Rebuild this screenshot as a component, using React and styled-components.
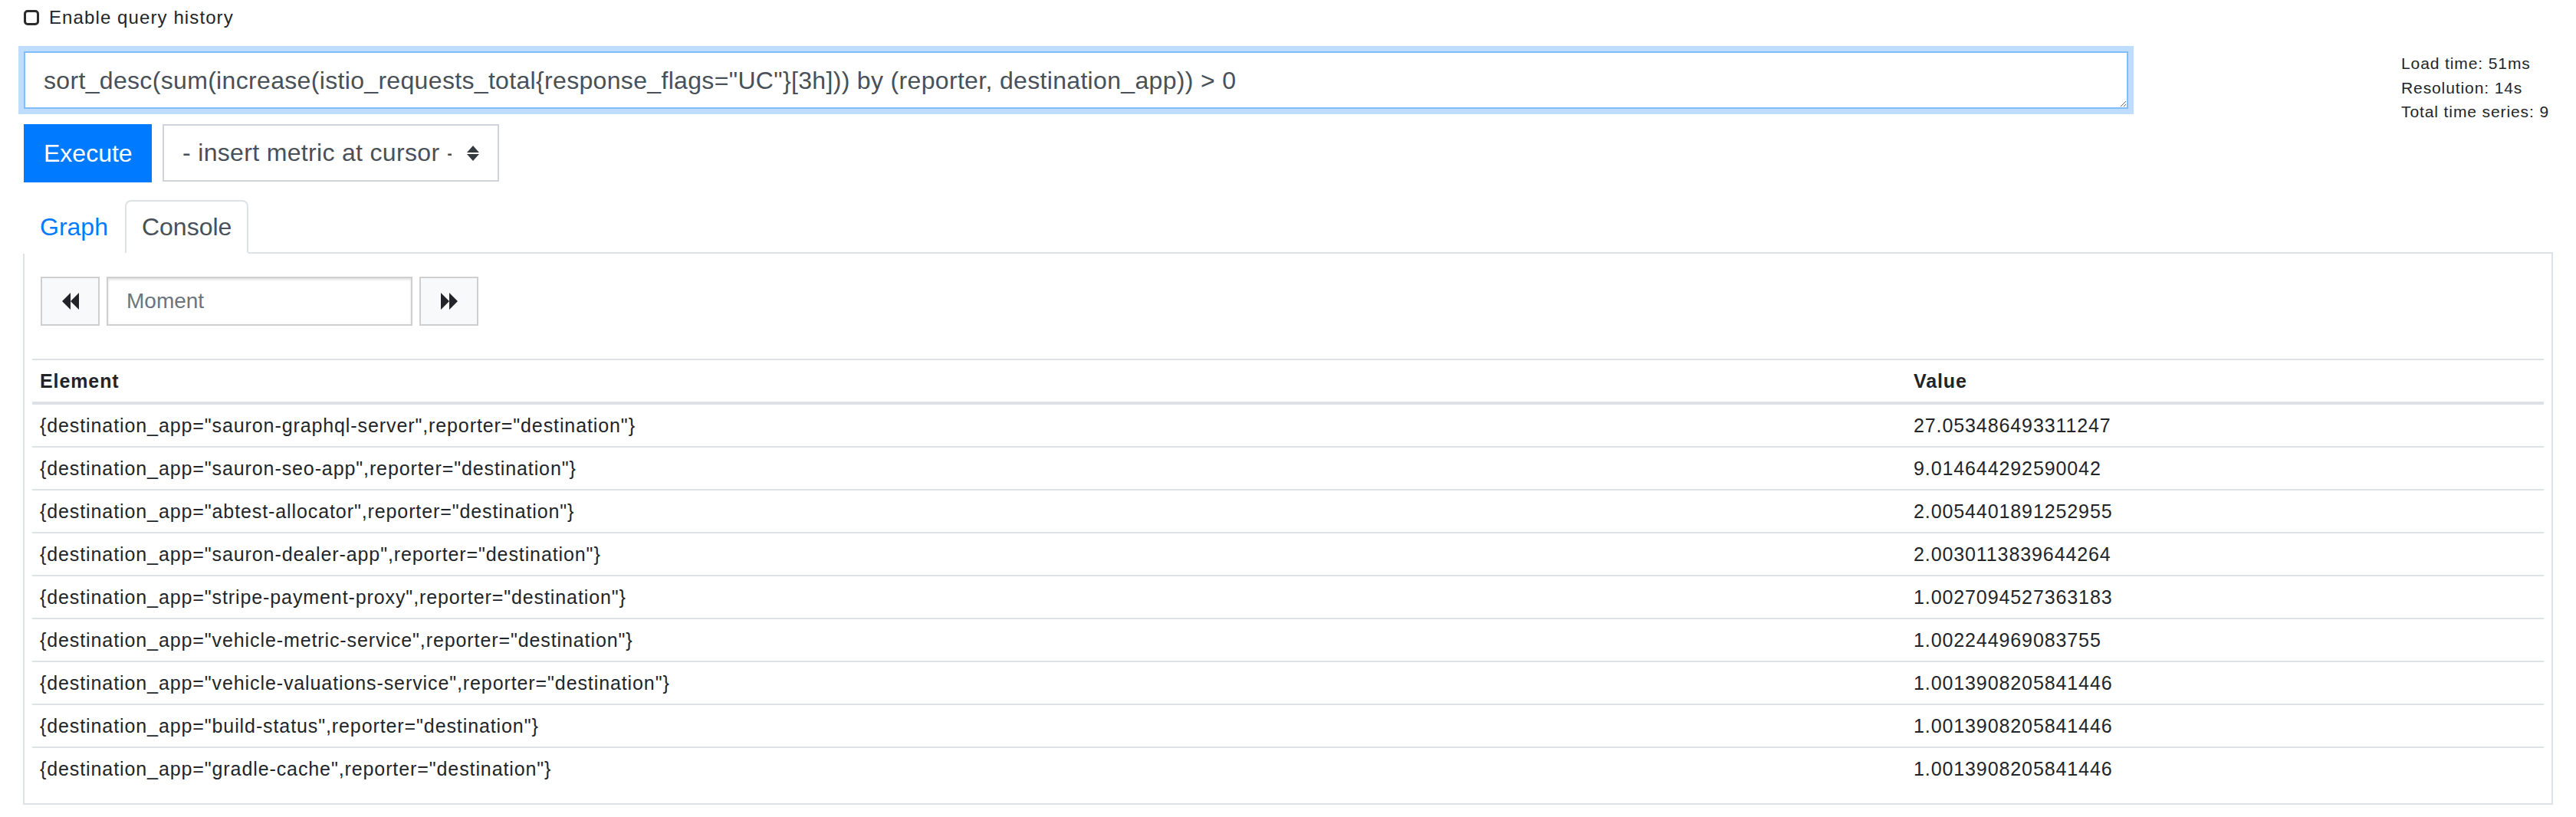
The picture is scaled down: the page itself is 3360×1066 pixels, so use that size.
import React from "react";
import styled, { createGlobalStyle } from "styled-components";

const GlobalStyle = createGlobalStyle`
  body {
    margin: 0;
    background: #fff;
    color: #212529;
    font-family: "Liberation Sans", Arial, Helvetica, sans-serif;
  }
`;

const rows = [
  ["sauron-graphql-server", "27.053486493311247"],
  ["sauron-seo-app", "9.014644292590042"],
  ["abtest-allocator", "2.0054401891252955"],
  ["sauron-dealer-app", "2.0030113839644264"],
  ["stripe-payment-proxy", "1.0027094527363183"],
  ["vehicle-metric-service", "1.002244969083755"],
  ["vehicle-valuations-service", "1.0013908205841446"],
  ["build-status", "1.0013908205841446"],
  ["gradle-cache", "1.0013908205841446"],
];

const BackIcon = () => (
  <svg width="22" height="22" viewBox="0 0 22 22">
    <path d="M0 11 L11 0 L11 22 Z M11 11 L22 0 L22 22 Z" fill="#212529" />
  </svg>
);

const ForwardIcon = () => (
  <svg width="22" height="22" viewBox="0 0 22 22">
    <path d="M0 0 L11 11 L0 22 Z M11 0 L22 11 L11 22 Z" fill="#212529" />
  </svg>
);

const SortArrows = () => (
  <svg width="16" height="20" viewBox="0 0 16 20">
    <path d="M8 0 L16 9 L0 9 Z M0 11 L16 11 L8 20 Z" fill="#343a40" />
  </svg>
);

const App = () => {
  return (
    <PAGE>
      <GlobalStyle />
      <HISTORY>
        <CHECKBOX type="checkbox" />
        <span>Enable query history</span>
      </HISTORY>

      <QUERYROW>
        <EDITOR>
          <EXPRESSION
            defaultValue={
              'sort_desc(sum(increase(istio_requests_total{response_flags="UC"}[3h])) by (reporter, destination_app)) > 0'
            }
            spellCheck={false}
          />
          <ACTIONS>
            <EXECUTE>Execute</EXECUTE>
            <SELECTBOX>
              <SELECTTEXT>- insert metric at cursor -</SELECTTEXT>
              <SortArrows />
            </SELECTBOX>
          </ACTIONS>
        </EDITOR>
        <STATS>
          <div>Load time: 51ms</div>
          <div>Resolution: 14s</div>
          <div>Total time series: 9</div>
        </STATS>
      </QUERYROW>

      <TABS>
        <TAB>Graph</TAB>
        <TAB active>Console</TAB>
      </TABS>

      <PANEL>
        <MOMENT>
          <STEPBUTTON>
            <BackIcon />
          </STEPBUTTON>
          <MOMENTINPUT placeholder="Moment" />
          <STEPBUTTON>
            <ForwardIcon />
          </STEPBUTTON>
        </MOMENT>

        <TABLE>
          <colgroup>
            <col style={{ width: "2444px" }} />
            <col />
          </colgroup>
          <thead>
            <tr>
              <TH>Element</TH>
              <TH>Value</TH>
            </tr>
          </thead>
          <tbody>
            {rows.map(([app, value]) => (
              <tr key={app}>
                <TD>{`{destination_app="${app}",reporter="destination"}`}</TD>
                <TD>{value}</TD>
              </tr>
            ))}
          </tbody>
        </TABLE>
      </PANEL>
    </PAGE>
  );
};

export default App;

const PAGE = styled.div`
  padding: 0 30px 11px 31px;
  box-sizing: border-box;
  width: 3360px;
`;

const HISTORY = styled.label`
  display: flex;
  align-items: center;
  gap: 13px;
  height: 46px;
  font-size: 24px;
  letter-spacing: 1.1px;
  color: #212529;
`;

const CHECKBOX = styled.input`
  appearance: none;
  margin: 0;
  width: 20px;
  height: 20px;
  box-sizing: border-box;
  border: 3px solid #2b2b2b;
  border-radius: 5px;
  background: #fff;
`;

const QUERYROW = styled.div`
  display: flex;
  align-items: flex-start;
  margin-top: 21px;
`;

const EDITOR = styled.div`
  width: 2745px;
  display: flex;
  flex-direction: column;
`;

const EXPRESSION = styled.textarea`
  box-sizing: border-box;
  width: 100%;
  height: 75px;
  margin: 0;
  padding: 12px 24px;
  border: 2px solid #80bdff;
  border-radius: 0;
  box-shadow: 0 0 0 7px rgba(0, 123, 255, 0.25);
  outline: none;
  font-family: "Liberation Sans", Arial, sans-serif;
  font-size: 32px;
  line-height: 48px;
  letter-spacing: 0.33px;
  color: #495057;
  resize: vertical;
  overflow: hidden;
`;

const ACTIONS = styled.div`
  display: flex;
  gap: 14px;
  margin-top: 20px;
`;

const EXECUTE = styled.button`
  box-sizing: border-box;
  width: 167px;
  height: 76px;
  padding: 0 24px;
  border: 2px solid #007bff;
  border-radius: 0;
  background: #007bff;
  color: #fff;
  font-family: "Liberation Sans", Arial, sans-serif;
  font-size: 32px;
`;

const SELECTBOX = styled.div`
  box-sizing: border-box;
  width: 439px;
  height: 75px;
  display: flex;
  align-items: center;
  gap: 20px;
  padding: 0 24px 0 24px;
  border: 2px solid #ced4da;
  color: #495057;
  font-size: 32px;
  letter-spacing: 0.33px;
`;

const SELECTTEXT = styled.span`
  width: 352px;
  overflow: hidden;
  white-space: nowrap;
`;

const STATS = styled.div`
  margin-left: 356px;
  font-size: 21px;
  line-height: 31.5px;
  letter-spacing: 0.9px;
  color: #212529;
`;

const TABS = styled.div`
  display: flex;
  margin: 23px 0 0 -1px;
  border-bottom: 2px solid #dee2e6;
`;

const TAB = styled.div`
  padding: 9px 20px;
  margin-bottom: -2px;
  border: 2px solid ${(p) => (p.active ? "#dee2e6" : "transparent")};
  border-bottom-color: ${(p) => (p.active ? "#fff" : "transparent")};
  border-radius: 8px 8px 0 0;
  background: #fff;
  font-size: 32px;
  line-height: 48px;
  color: ${(p) => (p.active ? "#495057" : "#007bff")};
`;

const PANEL = styled.div`
  margin-left: -1px;
  padding: 30px 10px 18px 10px;
  border: 2px solid #dee2e6;
  border-top: none;
`;

const MOMENT = styled.div`
  display: flex;
  gap: 9px;
  margin-left: 11px;
`;

const STEPBUTTON = styled.button`
  box-sizing: border-box;
  width: 77px;
  height: 64px;
  display: flex;
  align-items: center;
  justify-content: center;
  padding: 0;
  border: 2px solid #cfcfcf;
  border-radius: 0;
  background: #f8f9fa;
`;

const MOMENTINPUT = styled.input`
  box-sizing: border-box;
  width: 399px;
  height: 64px;
  padding: 0 24px;
  border: 2px solid #cfcfcf;
  border-radius: 0;
  box-shadow: inset 0 2px 3px rgba(0, 0, 0, 0.12);
  outline: none;
  font-family: "Liberation Sans", Arial, sans-serif;
  font-size: 28px;
  color: #495057;
  &::placeholder {
    color: #6c757d;
  }
`;

const TABLE = styled.table`
  width: 100%;
  margin-top: 43px;
  border-collapse: collapse;
  table-layout: fixed;
  font-size: 25px;
  letter-spacing: 0.9px;
  color: #212529;
`;

const TH = styled.th`
  padding: 9px 10px;
  line-height: 36px;
  text-align: left;
  font-weight: bold;
  border-top: 2px solid #dee2e6;
  border-bottom: 4px solid #dee2e6;
`;

const TD = styled.td`
  padding: 9px 10px;
  line-height: 36px;
  border-top: 2px solid #dee2e6;
  white-space: nowrap;
`;
